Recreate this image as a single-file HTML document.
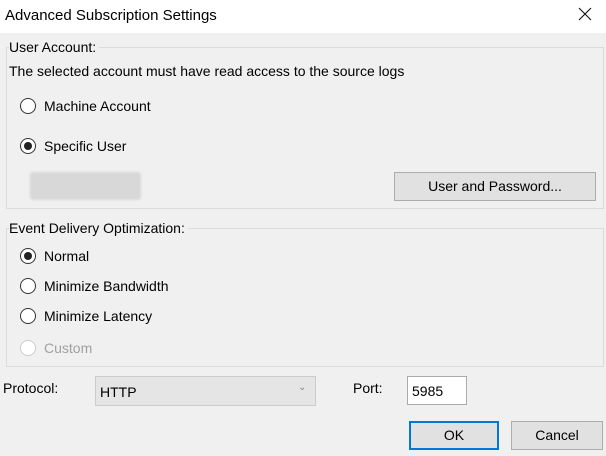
<!DOCTYPE html>
<html><head><style>
body{margin:0;width:606px;height:456px;background:#f0f0f0;font-family:"Liberation Sans",sans-serif;font-size:14px;color:#000;position:relative;overflow:hidden}
.a{position:absolute;white-space:nowrap}
.title{top:0;left:0;width:606px;height:33px;background:#fff}
.grp{border:1px solid #dcdcdc}
.r{position:absolute;width:16px;height:16px;border:1px solid #333;border-radius:50%;background:#fff;box-sizing:border-box}
.r.on::after{content:"";position:absolute;left:3px;top:3px;width:8px;height:8px;border-radius:50%;background:#222}
.btn{position:absolute;background:#e1e1e1;border:1px solid #adadad;box-sizing:border-box;text-align:center}
</style></head><body>
<div class="a title"></div>
<div class="a" style="left:5px;top:7px;font-size:15px">Advanced Subscription Settings</div>
<svg class="a" style="left:578px;top:7px" width="14" height="14"><path d="M1 1L13 13M13 1L1 13" stroke="#111" stroke-width="1.1"/></svg>
<div class="a grp" style="left:6px;top:47px;width:596px;height:160px"></div>
<div class="a" style="left:9px;top:39px;background:#f0f0f0;padding-right:3px">User Account:</div>
<div class="a" style="left:9px;top:63px">The selected account must have read access to the source logs</div>
<div class="r" style="left:20px;top:98px"></div><div class="a" style="left:44px;top:98px">Machine Account</div>
<div class="r on" style="left:20px;top:138px"></div><div class="a" style="left:44px;top:138px">Specific User</div>
<div class="a" style="left:30px;top:172px;width:111px;height:28px;background:#d8d8d8;border-radius:3px;filter:blur(1px)"></div>
<div class="btn" style="left:394px;top:172px;width:202px;height:29px;line-height:27px">User and Password...</div>
<div class="a grp" style="left:6px;top:228px;width:596px;height:137px"></div>
<div class="a" style="left:9px;top:220px;background:#f0f0f0;padding-right:3px">Event Delivery Optimization:</div>
<div class="r on" style="left:20px;top:248px"></div><div class="a" style="left:44px;top:248px">Normal</div>
<div class="r" style="left:20px;top:278px"></div><div class="a" style="left:44px;top:278px">Minimize Bandwidth</div>
<div class="r" style="left:20px;top:308px"></div><div class="a" style="left:44px;top:308px">Minimize Latency</div>
<div class="r" style="left:20px;top:340px;border-color:#ccc"></div><div class="a" style="left:44px;top:340px;color:#a0a0a0">Custom</div>
<div class="a" style="left:3px;top:380px">Protocol:</div>
<div class="a" style="left:95px;top:376px;width:221px;height:30px;background:#e5e5e5;border:1px solid #ccc;box-sizing:border-box"></div>
<div class="a" style="left:100px;top:384px">HTTP</div>
<div class="a" style="left:298px;top:382px;color:#888;font-size:10px">⌄</div>
<div class="a" style="left:353px;top:380px">Port:</div>
<div class="a" style="left:407px;top:376px;width:60px;height:29px;background:#fff;border:1px solid #aaa;box-sizing:border-box;padding:6px 4px">5985</div>
<div class="btn" style="left:409px;top:421px;width:90px;height:29px;line-height:25px;border:2px solid #0078d7">OK</div>
<div class="btn" style="left:511px;top:421px;width:92px;height:29px;line-height:27px">Cancel</div>
</body></html>
